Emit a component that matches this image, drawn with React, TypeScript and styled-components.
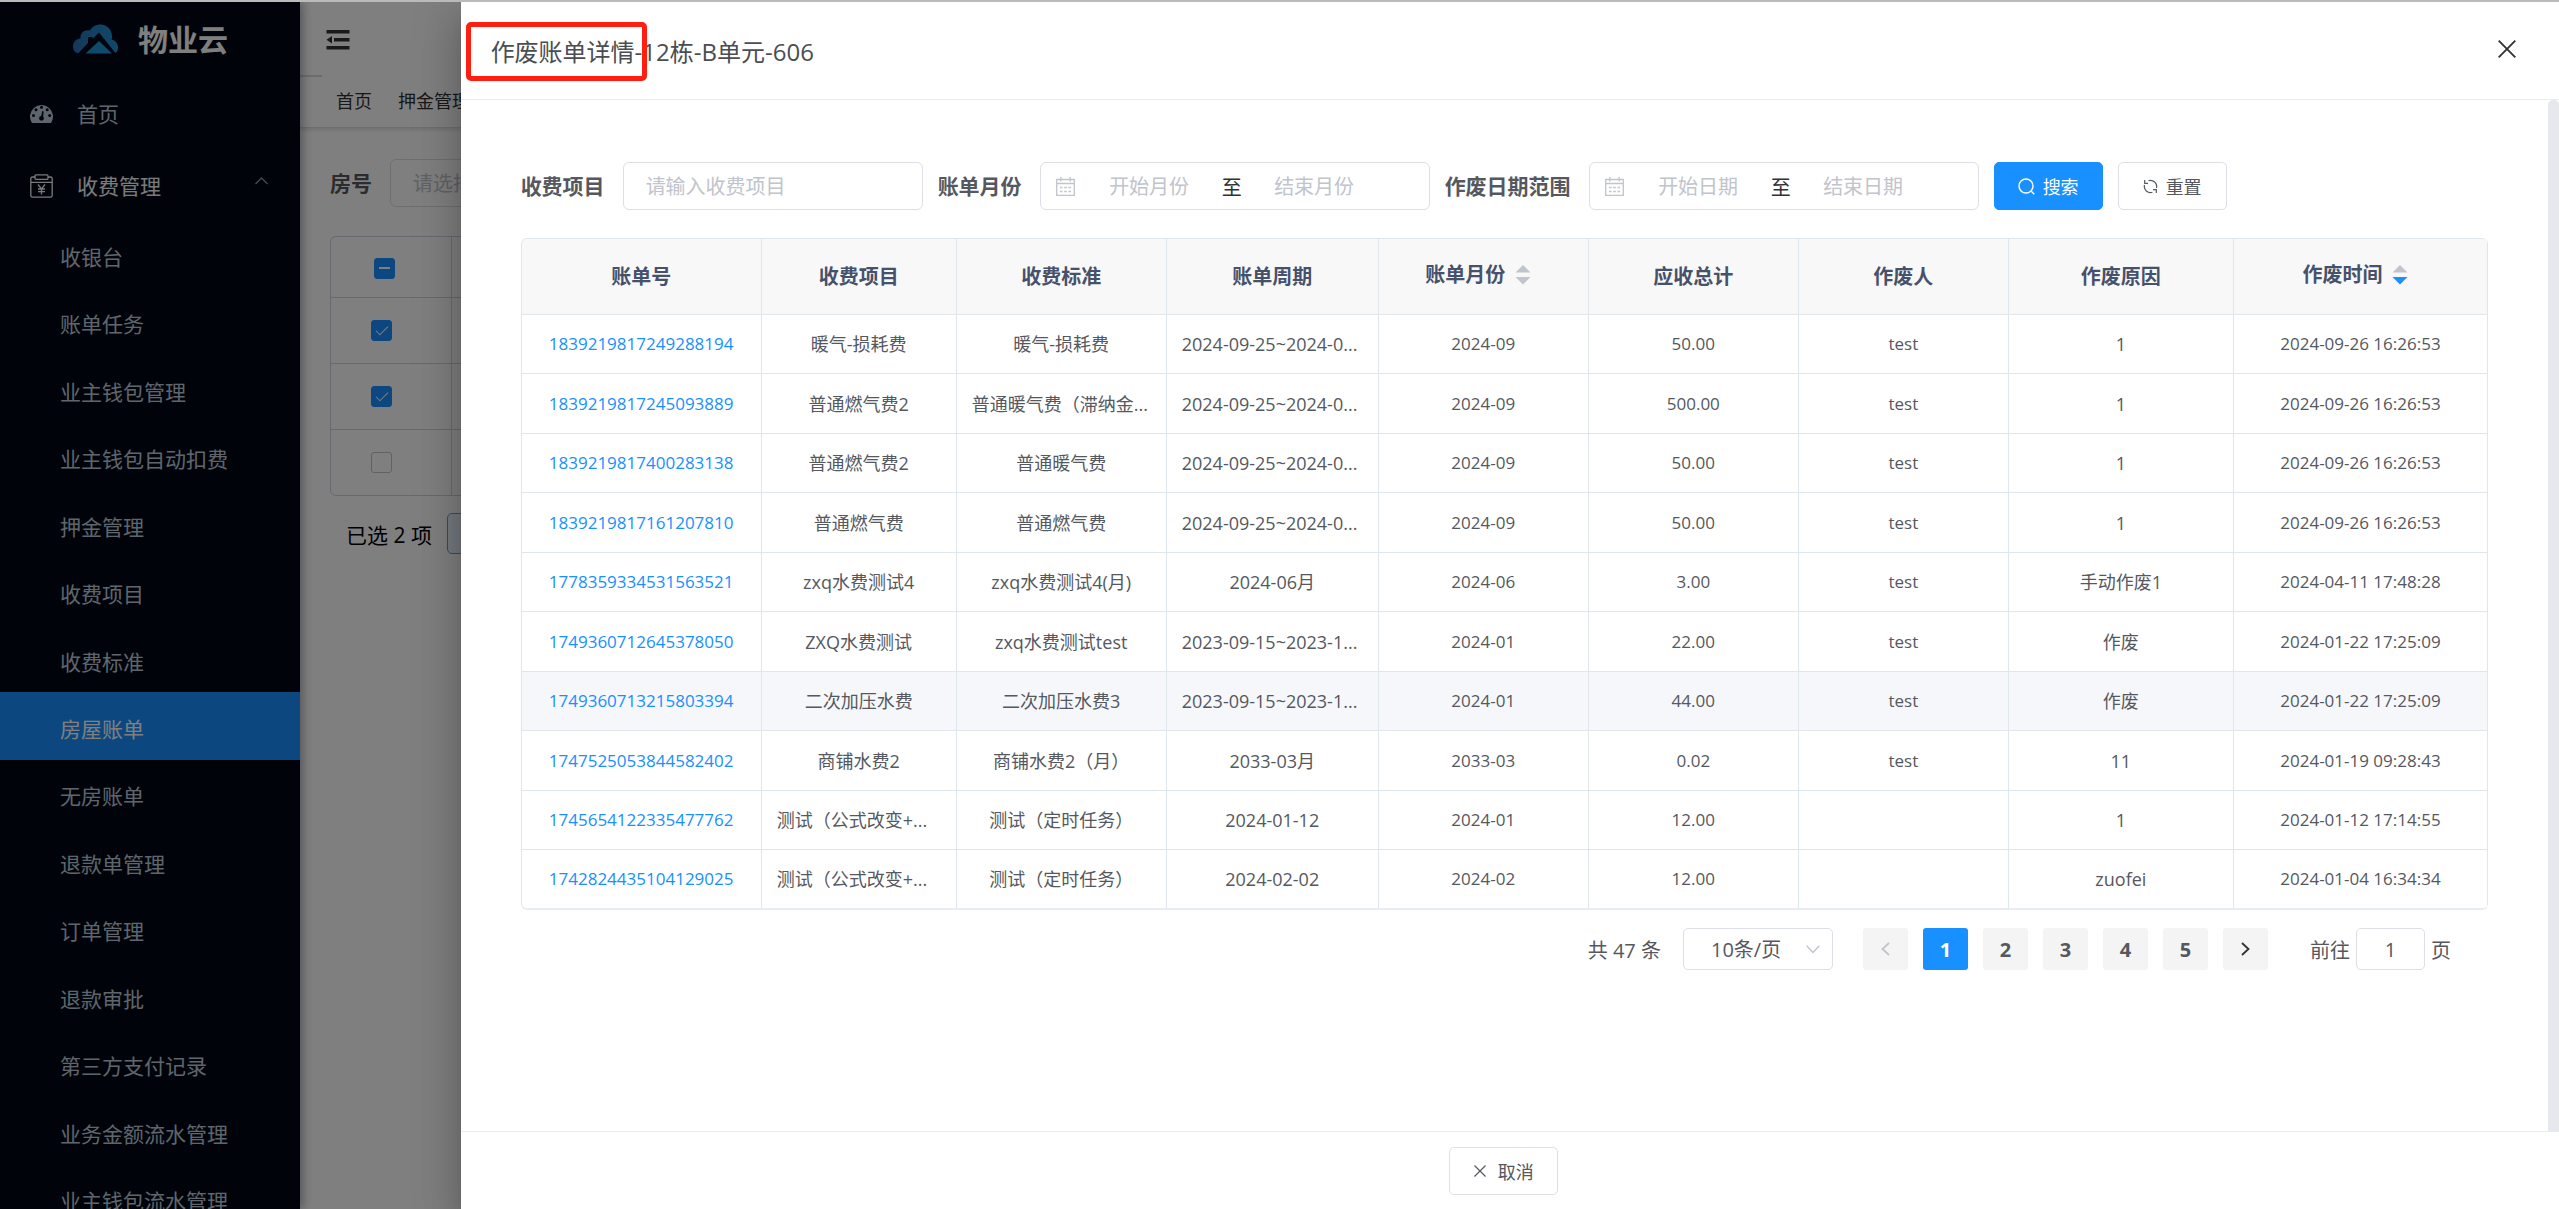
import React from 'react';
import styled, { createGlobalStyle, css } from 'styled-components';

const line = '#dfe6ec';
const blue = '#1890ff';
const textColor = '#55585e';
const control = '#dcdfe6';
const hint = '#c0c4cc';

const GlobalStyle = createGlobalStyle`
  *, *::before, *::after { box-sizing: border-box; }
  html, body, #root { height: 100%; }
  body { margin: 0; overflow: hidden; }
  body, button, input, select {
    font-family: 'Open Sans', 'Noto Sans CJK SC', sans-serif;
    font-size: 20px;
  }
  h1, h2, ul { margin: 0; padding: 0; }
  ul { list-style: none; }
  svg { display: block; flex: none; }
`;

const Page = styled.div`
  display: flex;
  flex-direction: column;
  height: 100vh;
  overflow: hidden;
`;
const TopStrip = styled.div`
  flex: none;
  height: 2px;
  background: #bababa;
`;
const Stage = styled.div`
  position: relative;
  flex: 1;
  min-height: 0;
  display: flex;
  overflow: hidden;
  background: #fff;
`;

/* ---------- sidebar ---------- */
const Sidebar = styled.nav`
  position: relative;
  flex: none;
  width: 300px;
  overflow: hidden;
  background: #010815;
  box-shadow: 3px 0 9px rgba(0, 21, 41, 0.35);
`;
const Brand = styled.div`
  display: flex;
  align-items: center;
  gap: 20px;
  height: 75px;
  padding-left: 73px;
`;
const BrandName = styled.h1`
  color: #fff;
  font-size: 30px;
  line-height: 40px;
`;
const MenuLink = styled.a<{ $tall?: boolean; $open?: boolean }>`
  display: flex;
  align-items: center;
  gap: 24px;
  height: ${(p) => (p.$tall ? 75 : 68)}px;
  padding: ${(p) => (p.$tall ? '0 32px 2px 30px' : '0 32px 0 30px')};
  color: ${(p) => (p.$open ? '#f4f4f5' : '#bfcbd9')};
  font-size: 21px;
  line-height: 30px;
  text-decoration: none;
  > svg:last-child:not(:first-child) {
    margin-left: auto;
    margin-bottom: 10px;
  }
`;
const SubMenu = styled.ul`
  display: grid;
  grid-template-rows: repeat(15, 1fr);
  height: 1012px;
`;
const SubLink = styled.a<{ $active?: boolean }>`
  display: flex;
  align-items: center;
  height: 100%;
  padding: 6px 0 0 60px;
  background: ${(p) => (p.$active ? blue : 'transparent')};
  color: ${(p) => (p.$active ? '#fff' : '#bfcbd9')};
  font-size: 21px;
  line-height: 30px;
  text-decoration: none;
`;

/* ---------- page behind the drawer ---------- */
const Main = styled.main`
  flex: 1;
  min-width: 0;
`;
const MainHead = styled.header`
  display: flex;
  align-items: center;
  height: 75px;
  padding-left: 26px;
  background: linear-gradient(#dcdcdc, #dcdcdc) left bottom / 22px 2px no-repeat;
`;
const PlainButton = styled.button`
  display: flex;
  padding: 0;
  border: 0;
  background: none;
  cursor: pointer;
`;
const CloseButton = styled(PlainButton)`
  padding-bottom: 5px;
`;
const TabBar = styled.div`
  display: flex;
  align-items: center;
  gap: 26px;
  height: 51px;
  padding: 0 0 3px 36px;
  border-bottom: 1px solid #d8dce5;
  box-shadow: 0 2px 4px rgba(0, 0, 0, 0.12);
`;
const TabLink = styled.a`
  color: #303133;
  font-size: 18px;
  line-height: 26px;
  text-decoration: none;
`;
const MainBody = styled.div`
  padding: 31px 30px;
`;
const Field = styled.div`
  display: flex;
  align-items: center;
  gap: 18px;
`;
const FieldLabel = styled.label`
  color: #55585e;
  font-size: 21px;
  font-weight: 700;
  line-height: 30px;
  white-space: nowrap;
`;
const TextInput = styled.input`
  width: 300px;
  height: 48px;
  padding: 0 22px;
  border: 1px solid ${control};
  border-radius: 6px;
  background: #fff;
  color: ${textColor};
  &::placeholder { color: ${hint}; opacity: 1; }
`;
const RoomTable = styled.table`
  width: 100%;
  margin-top: 29px;
  border: 1px solid #cdd3de;
  border-radius: 6px;
  border-spacing: 0;
  table-layout: fixed;
  td, th {
    height: 66px;
    padding: 0;
    border-top: 1px solid #cdd3de;
    border-left: 1px solid #cdd3de;
  }
  th { height: 60px; border-top: 0; }
  td:first-child, th:first-child {
    width: 120px;
    border-left: 0;
    padding-left: 40px;
    text-align: left;
  }
  th:first-child { padding: 2px 0 0 43px; }
`;
const Tick = styled.input<{ $partial?: boolean }>`
  appearance: none;
  position: relative;
  display: block;
  width: 21px;
  height: 21px;
  margin: 0;
  border: 1px solid #c4c4c4;
  border-radius: 3px;
  &:checked { background: ${blue}; border-color: ${blue}; }
  &:checked::after {
    content: '';
    position: absolute;
    ${(p) =>
      p.$partial
        ? css`
            left: 4px;
            top: 8px;
            width: 11px;
            height: 2px;
            background: #fff;
          `
        : css`
            left: 7px;
            top: 2px;
            width: 6px;
            height: 12px;
            border: solid #fff;
            border-width: 0 1px 1px 0;
            transform: rotate(45deg);
          `}
  }
`;
const Selected = styled.div`
  display: flex;
  align-items: center;
  gap: 15px;
  margin-top: 17px;
  padding-left: 16px;
  color: #000;
  font-size: 21px;
`;
const PaleButton = styled.button`
  width: 110px;
  height: 41px;
  border: 1px solid #3fa9f5;
  border-radius: 5px;
  background: #e8f4ff;
  color: ${blue};
`;

/* ---------- drawer ---------- */
const Mask = styled.div`
  position: absolute;
  inset: 0;
  display: flex;
  justify-content: flex-end;
  background: rgba(0, 0, 0, 0.5);
`;
const Drawer = styled.section`
  display: flex;
  flex-direction: column;
  width: 82%;
  background: #fff;
  box-shadow: 0 12px 15px -8px rgba(0, 0, 0, 0.2), 0 24px 36px 3px rgba(0, 0, 0, 0.14),
    0 9px 45px 8px rgba(0, 0, 0, 0.12);
`;
const DrawerHead = styled.header`
  flex: none;
  display: flex;
  align-items: center;
  justify-content: space-between;
  height: 98px;
  padding: 2px 43px 0 30px;
  border-bottom: 1px solid #e8eaec;
`;
const Title = styled.h2`
  position: relative;
  color: #4a4d52;
  font-size: 24px;
  font-weight: 400;
  line-height: 36px;
`;
const Highlight = styled.span`
  position: absolute;
  left: -25px;
  top: -12px;
  width: 181px;
  height: 59px;
  border: 5px solid #ff1e10;
  border-radius: 5px;
`;
const DrawerBody = styled.div`
  flex: 1;
  min-height: 0;
  display: flex;
`;
const ScrollArea = styled.div`
  flex: 1;
  min-width: 0;
  padding: 62px 60px 0;
`;
const ScrollThumb = styled.div`
  flex: none;
  width: 11px;
  border-radius: 5px 5px 0 0;
  background: #e6e8ee;
`;
const Filters = styled.form`
  display: flex;
  align-items: center;
  gap: 15px;
`;
const RangeBox = styled.div`
  display: flex;
  align-items: center;
  width: 390px;
  height: 48px;
  padding: 0 15px;
  border: 1px solid ${control};
  border-radius: 6px;
  svg { margin-right: 4px; }
`;
const RangeInput = styled.input`
  width: 141px;
  height: 44px;
  padding: 0;
  border: 0;
  background: none;
  color: ${textColor};
  text-align: center;
  &::placeholder { color: ${hint}; opacity: 1; }
`;
const RangeTo = styled.span`
  width: 24px;
  color: #303133;
  text-align: center;
`;
const Button = styled.button<{ $primary?: boolean; $roomy?: boolean }>`
  display: flex;
  align-items: center;
  justify-content: center;
  gap: ${(p) => (p.$roomy ? 12 : 8)}px;
  width: 109px;
  height: 48px;
  padding: 0;
  border: 1px solid ${(p) => (p.$primary ? blue : control)};
  border-radius: 5px;
  background: ${(p) => (p.$primary ? blue : '#fff')};
  color: ${(p) => (p.$primary ? '#fff' : textColor)};
  font-size: 18px;
  cursor: pointer;
`;

const Bills = styled.table`
  width: 100%;
  margin-top: 28px;
  border: 1px solid ${line};
  border-right: 0;
  border-bottom: 2px solid #e6ebf5;
  border-radius: 6px;
  border-spacing: 0;
  table-layout: fixed;
  overflow: hidden;
`;
const HeadCell = styled.th`
  height: 76px;
  padding: 0;
  border-right: 1px solid ${line};
  border-bottom: 1px solid ${line};
  background: #f8f8f9;
  color: #46516b;
  font-size: 20px;
  font-weight: 700;
  line-height: 30px;
`;
const SortHead = styled.span`
  display: flex;
  align-items: center;
  justify-content: center;
  padding-bottom: 4px;
`;
const Row = styled.tr<{ $hover?: boolean }>`
  height: 59px;
  &:nth-child(even) { height: 60px; }
  &:nth-child(even):last-child { height: 58px; }
  background: ${(p) => (p.$hover ? '#f5f7fb' : '#fff')};
  &:last-child td { border-bottom: 0; }
`;
const Cell = styled.td<{ $num?: boolean; $clipped?: boolean }>`
  padding: 0 15px;
  border-right: 1px solid ${line};
  border-bottom: 1px solid ${line};
  color: ${textColor};
  font-size: ${(p) => (p.$num ? 17 : 18)}px;
  line-height: 26px;
  text-align: ${(p) => (p.$clipped ? 'left' : 'center')};
  white-space: nowrap;
  overflow: hidden;
`;
const BillLink = styled.a`
  color: ${blue};
  text-decoration: none;
`;

const Pagination = styled.div`
  display: flex;
  align-items: center;
  justify-content: flex-end;
  margin-top: 18px;
  padding-right: 37px;
  color: ${textColor};
`;
const SizeBox = styled.div`
  position: relative;
  margin: 0 30px 0 22px;
  svg {
    position: absolute;
    right: 13px;
    top: 17px;
    pointer-events: none;
  }
`;
const SizeSelect = styled.select`
  appearance: none;
  display: block;
  width: 150px;
  height: 42px;
  padding: 0 30px 0 27px;
  border: 1px solid ${control};
  border-radius: 5px;
  background: #fff;
  color: ${textColor};
`;
const Pager = styled.div`
  display: flex;
  gap: 15px;
`;
const PageButton = styled.button<{ $active?: boolean }>`
  display: flex;
  align-items: center;
  justify-content: center;
  width: 45px;
  height: 42px;
  padding: 0;
  border: 0;
  border-radius: 3px;
  background: ${(p) => (p.$active ? blue : '#f4f4f5')};
  color: ${(p) => (p.$active ? '#fff' : textColor)};
  font-weight: 700;
`;
const Jump = styled.label`
  display: flex;
  align-items: center;
  gap: 6px;
  margin-left: 42px;
`;
const JumpInput = styled.input`
  width: 69px;
  height: 42px;
  padding: 0;
  border: 1px solid ${control};
  border-radius: 5px;
  color: ${textColor};
  text-align: center;
`;
const DrawerFoot = styled.footer`
  flex: none;
  display: flex;
  justify-content: center;
  height: 78px;
  padding: 15px 12px 0 0;
  border-top: 1px solid #e8eaec;
`;

/* ---------- icons ---------- */
const CloudLogo = () => (
  <svg width="45" height="31" viewBox="0 0 45 31">
    <defs>
      <linearGradient id="cloud" x1="0" y1="0" x2="1" y2="0">
        <stop offset="0" stopColor="#2a6fb4" />
        <stop offset="1" stopColor="#1f93d6" />
      </linearGradient>
    </defs>
    <path
      d="M4 29C1 28 0 25 0 22.500C0 18 3 15 7.500 14.500C7 9 11 5.500 17 6.500C19 2.500 23 0.500 27.500 0.500C34 0.500 39 5.500 39 12.500C39 13.500 39 14.500 38.500 15.500C42.500 16.500 45 19.500 45 23.500C45 26 44 28 42.500 29L26 8.500L19.500 15V13H15V19L5.500 29Z"
      fill="url(#cloud)"
    />
    <path d="M26 17L39 29.500H12.500Z" fill="#1f93d6" />
  </svg>
);
const GaugeIcon = () => (
  <svg width="23" height="19" viewBox="0 0 23 19">
    <path d="M2 19A11.500 11.500 0 1 1 21 19Z" fill="#bfcbd9" />
    <g fill="#010815">
      <circle cx="3.500" cy="11.500" r="1.500" />
      <circle cx="6" cy="5.800" r="1.500" />
      <circle cx="11.500" cy="3.300" r="1.500" />
      <circle cx="17.200" cy="5.800" r="1.500" />
      <circle cx="19.700" cy="11.500" r="1.500" />
      <circle cx="11.500" cy="14.300" r="2.400" />
      <path d="M10.800 14L12.300 7L13.700 7.400L12.800 14.500Z" />
    </g>
  </svg>
);
const BillIcon = () => (
  <svg width="23" height="24" viewBox="0 0 23 24" fill="none" stroke="#f4f4f5" strokeWidth="1.300">
    <path d="M5 3H2.500Q0.800 3 0.800 4.700V21.500Q0.800 23.200 2.500 23.200H20.500Q22.200 23.200 22.200 21.500V4.700Q22.200 3 20.500 3H18" />
    <path d="M1 8.300H22M6 0.800H17Q18 0.800 18 2V4.300Q18 5.300 17 5.300H6Q5 5.300 5 4.300V2Q5 0.800 6 0.800Z" />
    <path d="M8 10.500L11.500 15L15 10.500M11.500 15V20.500M8 15H15M8 17.600H15" />
  </svg>
);
const ArrowUp = () => (
  <svg width="13" height="8" viewBox="0 0 13 8" fill="none" stroke="#8d949e" strokeWidth="1.300">
    <path d="M0.500 7L6.500 1L12.500 7" />
  </svg>
);
const FoldIcon = () => (
  <svg width="24" height="20" viewBox="0 0 24 20" fill="#333">
    <path d="M0.500 0H23.500V3.500H0.500ZM8 8H23.500V11.500H8ZM0.500 16H23.500V19.500H0.500ZM6 6V13.500L0.500 9.800Z" />
  </svg>
);
const CloseIcon = ({ size, color, width }: { size: number; color: string; width: number }) => (
  <svg width={size} height={size} viewBox="0 0 18 18" fill="none" stroke={color} strokeWidth={width}>
    <path d="M0.700 0.700L17.300 17.300M17.300 0.700L0.700 17.300" />
  </svg>
);
const CalendarIcon = () => (
  <svg width="19" height="19" viewBox="0 0 19 19" fill="none" stroke={hint} strokeWidth="1.300">
    <path d="M0.700 2.500H18.300V18.300H0.700ZM0.700 6.500H18.300M4.800 0V4.500M14.200 0V4.500" />
    <path d="M4 10.500H6.500M8.200 10.500H10.800M12.500 10.500H15M4 14.500H6.500M8.200 14.500H10.800M12.500 14.500H15" />
  </svg>
);
const SearchIcon = () => (
  <svg width="17" height="17" viewBox="0 0 17 17" fill="none" stroke="#fff" strokeWidth="1.400">
    <circle cx="8" cy="8" r="7" />
    <path d="M12.800 12.800L16.300 16.300" />
  </svg>
);
const RefreshIcon = () => (
  <svg width="15" height="15" viewBox="0 0 15 15" fill="none" stroke={textColor} strokeWidth="1.200">
    <path d="M5.500 1.700A6.200 6.200 0 0 1 13.500 9M9.500 13.300A6.200 6.200 0 0 1 1.500 6" />
    <path d="M1.700 1V4.300H5M13.300 14V10.700H10" />
  </svg>
);
const SortIcon = ({ down }: { down?: boolean }) => (
  <svg width="36" height="20" viewBox="0 0 36 20">
    <path d="M10.500 7.500L18 0L25.500 7.500Z" fill={hint} />
    <path d="M10.500 12L18 19.500L25.500 12Z" fill={down ? blue : hint} />
  </svg>
);
const ChevronDown = () => (
  <svg width="14" height="9" viewBox="0 0 14 9" fill="none" stroke={hint} strokeWidth="1.300">
    <path d="M0.700 0.700L7 7.500L13.300 0.700" />
  </svg>
);
const PageArrow = ({ next }: { next?: boolean }) => (
  <svg width="9" height="14" viewBox="0 0 9 14" fill="none" stroke={next ? '#303133' : hint} strokeWidth="1.800">
    <path d={next ? 'M1 1L7.500 7L1 13' : 'M8 1L1.500 7L8 13'} />
  </svg>
);

/* ---------- data ---------- */
const subMenu = [
  '收银台', '账单任务', '业主钱包管理', '业主钱包自动扣费', '押金管理', '收费项目', '收费标准', '房屋账单',
  '无房账单', '退款单管理', '订单管理', '退款审批', '第三方支付记录', '业务金额流水管理', '业主钱包流水管理',
];

type Column = { title: string; width: number; num?: boolean; sort?: 'none' | 'down' };
const columns: Column[] = [
  { title: '账单号', width: 240, num: true },
  { title: '收费项目', width: 195 },
  { title: '收费标准', width: 210 },
  { title: '账单周期', width: 212 },
  { title: '账单月份', width: 210, num: true, sort: 'none' },
  { title: '应收总计', width: 210, num: true },
  { title: '作废人', width: 210, num: true },
  { title: '作废原因', width: 225 },
  { title: '作废时间', width: 254, num: true, sort: 'down' },
];

const bills: string[][] = [
  ['1839219817249288194', '暖气-损耗费', '暖气-损耗费', '2024-09-25~2024-0...', '2024-09', '50.00', 'test', '1', '2024-09-26 16:26:53'],
  ['1839219817245093889', '普通燃气费2', '普通暖气费（滞纳金...', '2024-09-25~2024-0...', '2024-09', '500.00', 'test', '1', '2024-09-26 16:26:53'],
  ['1839219817400283138', '普通燃气费2', '普通暖气费', '2024-09-25~2024-0...', '2024-09', '50.00', 'test', '1', '2024-09-26 16:26:53'],
  ['1839219817161207810', '普通燃气费', '普通燃气费', '2024-09-25~2024-0...', '2024-09', '50.00', 'test', '1', '2024-09-26 16:26:53'],
  ['1778359334531563521', 'zxq水费测试4', 'zxq水费测试4(月)', '2024-06月', '2024-06', '3.00', 'test', '手动作废1', '2024-04-11 17:48:28'],
  ['1749360712645378050', 'ZXQ水费测试', 'zxq水费测试test', '2023-09-15~2023-1...', '2024-01', '22.00', 'test', '作废', '2024-01-22 17:25:09'],
  ['1749360713215803394', '二次加压水费', '二次加压水费3', '2023-09-15~2023-1...', '2024-01', '44.00', 'test', '作废', '2024-01-22 17:25:09'],
  ['1747525053844582402', '商铺水费2', '商铺水费2（月）', '2033-03月', '2033-03', '0.02', 'test', '11', '2024-01-19 09:28:43'],
  ['1745654122335477762', '测试（公式改变+...', '测试（定时任务）', '2024-01-12', '2024-01', '12.00', '', '1', '2024-01-12 17:14:55'],
  ['1742824435104129025', '测试（公式改变+...', '测试（定时任务）', '2024-02-02', '2024-02', '12.00', '', 'zuofei', '2024-01-04 16:34:34'],
];

const DateRange = ({ id, unit }: { id: string; unit: string }) => (
  <RangeBox>
    <CalendarIcon />
    <RangeInput id={id} placeholder={`开始${unit}`} />
    <RangeTo>至</RangeTo>
    <RangeInput aria-label={`结束${unit}`} placeholder={`结束${unit}`} />
  </RangeBox>
);

export default function App() {
  return (
    <Page>
      <GlobalStyle />
      <TopStrip />
      <Stage>
        <Sidebar>
          <Brand>
            <CloudLogo />
            <BrandName>物业云</BrandName>
          </Brand>
          <MenuLink href="#" $tall>
            <GaugeIcon />
            首页
          </MenuLink>
          <MenuLink href="#" $open>
            <BillIcon />
            收费管理
            <ArrowUp />
          </MenuLink>
          <SubMenu>
            {subMenu.map((name) => (
              <li key={name}>
                <SubLink href="#" $active={name === '房屋账单'}>{name}</SubLink>
              </li>
            ))}
          </SubMenu>
        </Sidebar>

        <Main>
          <MainHead>
            <PlainButton aria-label="折叠菜单">
              <FoldIcon />
            </PlainButton>
          </MainHead>
          <TabBar>
            <TabLink href="#">首页</TabLink>
            <TabLink href="#">押金管理</TabLink>
          </TabBar>
          <MainBody>
            <Field>
              <FieldLabel htmlFor="room">房号</FieldLabel>
              <TextInput id="room" placeholder="请选择" />
            </Field>
            <RoomTable>
              <thead>
                <tr>
                  <th><Tick type="checkbox" aria-label="全选" defaultChecked $partial /></th>
                  <th />
                </tr>
              </thead>
              <tbody>
                {[true, true, false].map((checked, i) => (
                  <tr key={i}>
                    <td><Tick type="checkbox" aria-label={`选择第${i + 1}行`} defaultChecked={checked} /></td>
                    <td />
                  </tr>
                ))}
              </tbody>
            </RoomTable>
            <Selected>
              <span>已选 2 项</span>
              <PaleButton aria-label="批量操作" />
            </Selected>
          </MainBody>
        </Main>

        <Mask>
          <Drawer role="dialog" aria-labelledby="drawer-title">
            <DrawerHead>
              <Title id="drawer-title">
                作废账单详情-12栋-B单元-606
                <Highlight />
              </Title>
              <CloseButton aria-label="关闭">
                <CloseIcon size={18} color="#303133" width={1.8} />
              </CloseButton>
            </DrawerHead>

            <DrawerBody>
              <ScrollArea>
                <Filters onSubmit={(e) => e.preventDefault()}>
                  <Field>
                    <FieldLabel htmlFor="item">收费项目</FieldLabel>
                    <TextInput id="item" placeholder="请输入收费项目" />
                  </Field>
                  <Field>
                    <FieldLabel htmlFor="month">账单月份</FieldLabel>
                    <DateRange id="month" unit="月份" />
                  </Field>
                  <Field>
                    <FieldLabel htmlFor="date">作废日期范围</FieldLabel>
                    <DateRange id="date" unit="日期" />
                  </Field>
                  <Button type="submit" $primary>
                    <SearchIcon />
                    搜索
                  </Button>
                  <Button type="reset">
                    <RefreshIcon />
                    重置
                  </Button>
                </Filters>

                <Bills>
                  <colgroup>
                    {columns.map((c) => (
                      <col key={c.title} style={{ width: c.width }} />
                    ))}
                  </colgroup>
                  <thead>
                    <tr>
                      {columns.map((c) => (
                        <HeadCell key={c.title} scope="col">
                          {c.sort ? (
                            <SortHead>
                              {c.title}
                              <SortIcon down={c.sort === 'down'} />
                            </SortHead>
                          ) : (
                            c.title
                          )}
                        </HeadCell>
                      ))}
                    </tr>
                  </thead>
                  <tbody>
                    {bills.map((bill, r) => (
                      <Row key={bill[0]} $hover={r === 6}>
                        {bill.map((value, i) => (
                          <Cell key={i} $num={columns[i].num} $clipped={value.endsWith('...')}>
                            {i === 0 ? <BillLink href="#">{value}</BillLink> : value}
                          </Cell>
                        ))}
                      </Row>
                    ))}
                  </tbody>
                </Bills>

                <Pagination>
                  <span>共 47 条</span>
                  <SizeBox>
                    <SizeSelect aria-label="每页条数">
                      <option>10条/页</option>
                    </SizeSelect>
                    <ChevronDown />
                  </SizeBox>
                  <Pager>
                    <PageButton aria-label="上一页" disabled><PageArrow /></PageButton>
                    {[1, 2, 3, 4, 5].map((n) => (
                      <PageButton key={n} $active={n === 1}>{n}</PageButton>
                    ))}
                    <PageButton aria-label="下一页"><PageArrow next /></PageButton>
                  </Pager>
                  <Jump>
                    前往
                    <JumpInput defaultValue="1" />
                    页
                  </Jump>
                </Pagination>
              </ScrollArea>
              <ScrollThumb />
            </DrawerBody>

            <DrawerFoot>
              <Button type="button" $roomy>
                <CloseIcon size={12} color={textColor} width={1.8} />
                取消
              </Button>
            </DrawerFoot>
          </Drawer>
        </Mask>
      </Stage>
    </Page>
  );
}
